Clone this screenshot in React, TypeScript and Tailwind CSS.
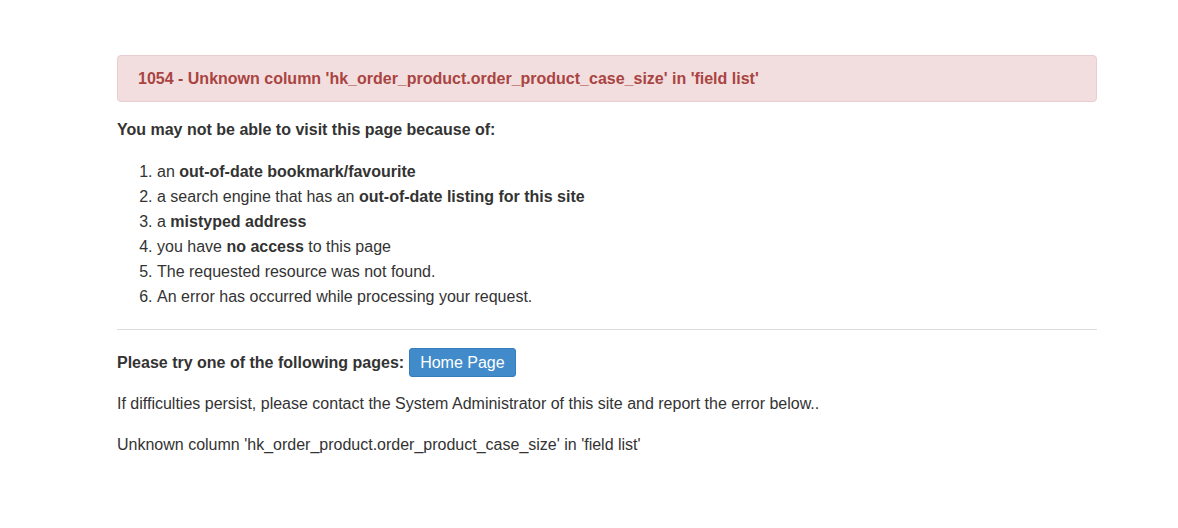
export default function App() {
  return (
    <div className="min-h-[528px] bg-white text-[#333] text-[14px] leading-[20px]" style={{ fontFamily: '"Liberation Sans", Arial, sans-serif' }}>
      <div className="ml-[117px] w-[980px] pt-[55px]">
        <div className="rounded-[4px] border border-[#ebccd1] bg-[#f2dede] px-[20px] pt-[13px] pb-[12px] text-[#a94442]">
          <span className="text-[16px] font-bold leading-[20px]">1054 - Unknown column 'hk_order_product.order_product_case_size' in 'field list'</span>
        </div>
        <p className="mt-[18px] text-[16px] font-bold">You may not be able to visit this page because of:</p>
        <ol className="mt-[19px] list-decimal pl-[40px] text-[16px] leading-[25px]">
          <li>an <b>out-of-date bookmark/favourite</b></li>
          <li>a search engine that has an <b>out-of-date listing for this site</b></li>
          <li>a <b>mistyped address</b></li>
          <li>you have <b>no access</b> to this page</li>
          <li>The requested resource was not found.</li>
          <li>An error has occurred while processing your request.</li>
        </ol>
        <hr className="mt-[20px] border-t border-[#ddd]" />
        <div className="mt-[18px] flex items-center text-[16px]">
          <b>Please try one of the following pages:</b>
          <button className="ml-[5px] h-[29px] rounded-[3px] border border-[#357ebd] bg-[#428bca] px-[10px] text-[16px] text-white">Home Page</button>
        </div>
        <p className="mt-[17px] text-[16px]">If difficulties persist, please contact the System Administrator of this site and report the error below..</p>
        <p className="mt-[21px] text-[16px]">Unknown column 'hk_order_product.order_product_case_size' in 'field list'</p>
      </div>
    </div>
  );
}
